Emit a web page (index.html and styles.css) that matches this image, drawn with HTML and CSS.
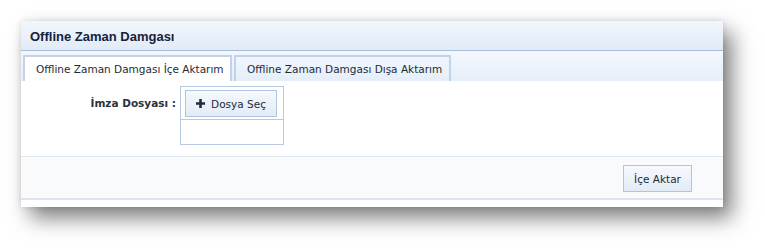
FILE: index.html
```html
<!DOCTYPE html>
<html>
  <head>
    <title>Offline Zaman Damgası</title>
    <link rel="stylesheet" href="styles.css">
  </head>
  <body>
    <div class="panel">
      <div class="panel-header">Offline Zaman Damgası</div>
      <div class="tabs">
        <div class="tab active">Offline Zaman Damgası İçe Aktarım</div>
        <div class="tab">Offline Zaman Damgası Dışa Aktarım</div>
      </div>
      <div class="content">
        <div class="form-row">
          <label class="label">İmza Dosyası :</label>
          <div class="upload">
            <div class="upload-bar">
              <button class="btn choose">
                <svg width="9" height="9" viewBox="0 0 9 9"><path d="M3.2 0h2.6v3.2H9v2.6H5.8V9H3.2V5.8H0V3.2h3.2z" fill="#1f2d3d"/></svg>
                Dosya Seç
              </button>
            </div>
            <div class="upload-list"></div>
          </div>
        </div>
      </div>
      <div class="footer">
        <button class="btn submit">İçe Aktar</button>
      </div>
    </div>
  </body>
</html>
```
FILE: styles.css
```css
html,
body {
  margin: 0;
  background-color: #fff;
  font-family: Tahoma, "DejaVu Sans", sans-serif;
  font-size: 11px;
  color: #1e2a3a;
}
body {
  padding: 21px 0 0 21px;
  min-height: 250px;
  box-sizing: border-box;
}
.panel {
  width: 702px;
  height: 186px;
  background: #fff;
  box-shadow: 9px 11px 20px rgba(0, 0, 0, 0.5), 0 0 6px rgba(0, 0, 0, 0.12);
  display: flex;
  flex-direction: column;
}
.panel-header {
  height: 30px;
  box-sizing: border-box;
  padding: 8px 0 0 9px;
  font-family: "Liberation Sans", Arial, sans-serif;
  font-size: 13px;
  font-weight: bold;
  color: #15233a;
  background: linear-gradient(#f1f6fc, #e1ebf7);
  border-bottom: 1px solid #a9bfd9;
}
.tabs {
  height: 30px;
  box-sizing: border-box;
  padding: 4px 0 0 2px;
  display: flex;
  gap: 2px;
  align-items: flex-end;
  background: linear-gradient(#f4f8fd, #e5eef9);
}
.tab {
  height: 26px;
  box-sizing: border-box;
  padding: 6px 0 0 11px;
  border: 2px solid #c1d3ea;
  border-bottom: none;
  font-size: 10.5px;
  color: #1e2a3a;
}
.tab:first-child {
  width: 209px;
}
.tab:last-child {
  width: 217px;
}
.tab.active {
  background: #fff;
}
.content {
  height: 75px;
  border-bottom: 1px solid #dfe7f0;
}
.form-row {
  display: flex;
  padding-top: 5px;
}
.label {
  width: 155px;
  text-align: right;
  padding: 11px 4px 0 0;
  font-weight: bold;
  font-size: 10.5px;
  color: #2a3340;
}
.upload {
  width: 104px;
  height: 59px;
  box-sizing: border-box;
  border: 1px solid #b7c9e0;
  display: flex;
  flex-direction: column;
}
.upload-bar {
  padding: 3px 6px 2px 4px;
  border-bottom: 1px solid #b7c9e0;
}
.btn {
  display: flex;
  align-items: center;
  justify-content: center;
  box-sizing: border-box;
  border: 1px solid #afc4df;
  background: linear-gradient(#f6f9fd, #e2ebf6);
  font-family: Tahoma, "DejaVu Sans", sans-serif;
  font-size: 10.5px;
  color: #1e2a3a;
  padding: 0;
}
.choose {
  width: 92px;
  height: 27px;
  gap: 6px;
}
.upload-list {
  flex: 1;
}
.footer {
  height: 43px;
  box-sizing: border-box;
  background: #f8fafc;
  border-bottom: 2px solid #dde6f0;
  display: flex;
  justify-content: flex-end;
  align-items: flex-start;
  padding: 8px 31px 0 0;
}
.submit {
  width: 69px;
  height: 27px;
}
```
